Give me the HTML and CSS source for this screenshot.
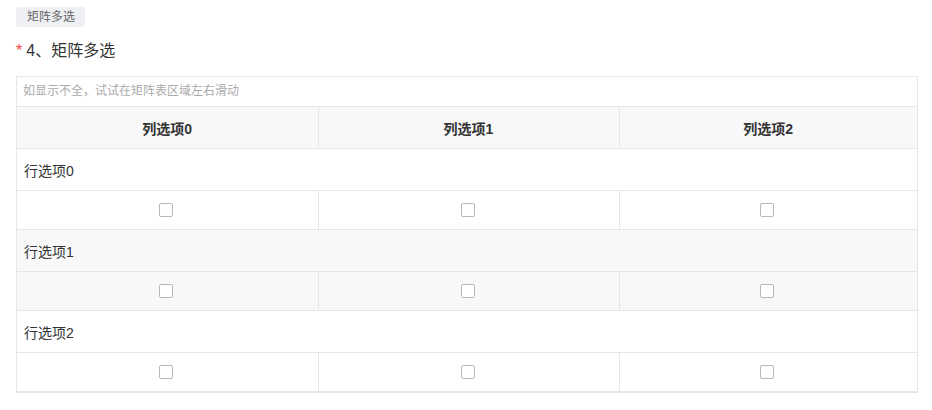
FILE: index.html
```html
<!DOCTYPE html>
<html lang="zh-CN">
<head>
    <meta charset="UTF-8">
    <meta name="viewport" content="width=device-width, initial-scale=1.0">
    <title>矩阵多选</title>
    <link rel="stylesheet" href="styles.css">
</head>
<body>
    <div class="question">
        <span class="tag">矩阵多选</span>
        <div class="title"><span class="required">*</span>4、矩阵多选</div>

        <div class="matrix">
            <div class="hint">如显示不全，试试在矩阵表区域左右滑动</div>
            <table class="matrix-table">
                <colgroup>
                    <col class="col-a">
                    <col class="col-b">
                    <col>
                </colgroup>
                <thead>
                    <tr>
                        <th>列选项0</th>
                        <th>列选项1</th>
                        <th>列选项2</th>
                    </tr>
                </thead>
                <tbody>
                    <tr class="row-label">
                        <td colspan="3">行选项0</td>
                    </tr>
                    <tr class="row-checks">
                        <td><span class="checkbox"></span></td>
                        <td><span class="checkbox"></span></td>
                        <td><span class="checkbox"></span></td>
                    </tr>
                    <tr class="row-label alt">
                        <td colspan="3">行选项1</td>
                    </tr>
                    <tr class="row-checks alt">
                        <td><span class="checkbox"></span></td>
                        <td><span class="checkbox"></span></td>
                        <td><span class="checkbox"></span></td>
                    </tr>
                    <tr class="row-label">
                        <td colspan="3">行选项2</td>
                    </tr>
                    <tr class="row-checks">
                        <td><span class="checkbox"></span></td>
                        <td><span class="checkbox"></span></td>
                        <td><span class="checkbox"></span></td>
                    </tr>
                </tbody>
            </table>
        </div>
    </div>
</body>
</html>
```

FILE: styles.css
```css
body {
    font-family: "Liberation Sans", "Noto Sans CJK SC", sans-serif;
    margin: 0;
    background-color: #ffffff;
    color: #333333;
}

.question {
    padding: 7px 14px 0 16px;
}

.tag {
    display: inline-block;
    height: 20px;
    line-height: 20px;
    padding: 0 10px 0 11px;
    font-size: 12px;
    color: #666666;
    background-color: #eef0f4;
    border-radius: 3px;
}

.title {
    margin-top: 13px;
    font-size: 16px;
    line-height: 22px;
    color: #333333;
}

.required {
    color: #f5433d;
    margin-right: 4px;
}

.matrix {
    margin-top: 14px;
    border: 1px solid #e6e6e6;
    border-bottom: none;
    width: 900px;
}

.hint {
    height: 29px;
    line-height: 29px;
    padding-left: 6px;
    font-size: 12px;
    color: #aaaaaa;
    border-bottom: 1px solid #e6e6e6;
}

.matrix-table {
    width: 100%;
    border-collapse: collapse;
    table-layout: fixed;
    font-size: 14px;
}

.col-a {
    width: 301px;
}

.col-b {
    width: 301px;
}

.matrix-table th {
    height: 41px;
    font-weight: 600;
    color: #333333;
    background-color: #f8f8f8;
    border-left: 1px solid #e6e6e6;
    border-bottom: 1px solid #e6e6e6;
    padding: 0;
}

.matrix-table th:first-child,
.matrix-table td:first-child {
    border-left: none;
}

.matrix-table td {
    border-left: 1px solid #e6e6e6;
    border-bottom: 1px solid #e6e6e6;
    padding: 0;
}

.row-label td {
    height: 41px;
    padding-left: 7px;
    text-align: left;
}

.row-checks td {
    height: 38px;
    padding-right: 2px;
}

.alt td {
    background-color: #f8f8f8;
}

.matrix-table tbody tr:last-child td {
    border-bottom: 2px solid #e6e6e6;
}

.checkbox {
    display: block;
    width: 12px;
    height: 12px;
    margin: 0 auto;
    border: 1.5px solid #b8b8b8;
    border-radius: 2px;
    background-color: #ffffff;
}
```
